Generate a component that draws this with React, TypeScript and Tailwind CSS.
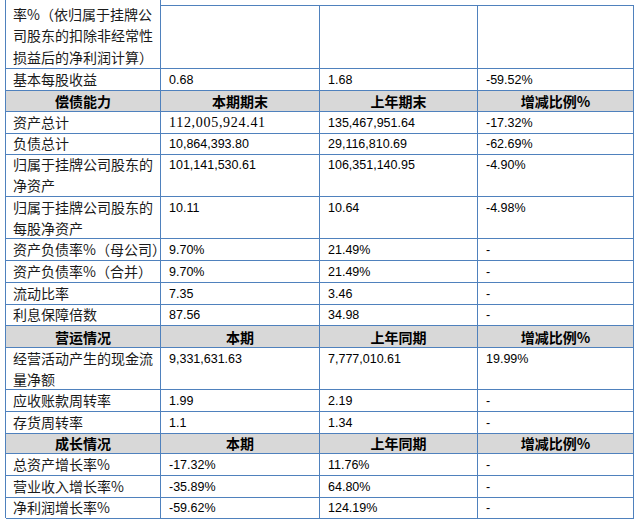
import React from "react";

type Row =
  | { kind: "header"; cells: [string, string, string, string]; h: number }
  | { kind: "data"; label: string[]; v: [string, string, string]; h: number; serif?: boolean };

const rows: Row[] = [
  { kind: "data", label: ["基本每股收益"], v: ["0.68", "1.68", "-59.52%"], h: 21 },
  { kind: "header", cells: ["偿债能力", "本期期末", "上年期末", "增减比例%"], h: 22 },
  { kind: "data", label: ["资产总计"], v: ["112,005,924.41", "135,467,951.64", "-17.32%"], h: 21, serif: true },
  { kind: "data", label: ["负债总计"], v: ["10,864,393.80", "29,116,810.69", "-62.69%"], h: 21 },
  { kind: "data", label: ["归属于挂牌公司股东的", "净资产"], v: ["101,141,530.61", "106,351,140.95", "-4.90%"], h: 43 },
  { kind: "data", label: ["归属于挂牌公司股东的", "每股净资产"], v: ["10.11", "10.64", "-4.98%"], h: 42 },
  { kind: "data", label: ["资产负债率%（母公司）"], v: ["9.70%", "21.49%", "-"], h: 22 },
  { kind: "data", label: ["资产负债率%（合并）"], v: ["9.70%", "21.49%", "-"], h: 22 },
  { kind: "data", label: ["流动比率"], v: ["7.35", "3.46", "-"], h: 21 },
  { kind: "data", label: ["利息保障倍数"], v: ["87.56", "34.98", "-"], h: 22 },
  { kind: "header", cells: ["营运情况", "本期", "上年同期", "增减比例%"], h: 22 },
  { kind: "data", label: ["经营活动产生的现金流", "量净额"], v: ["9,331,631.63", "7,777,010.61", "19.99%"], h: 42 },
  { kind: "data", label: ["应收账款周转率"], v: ["1.99", "2.19", "-"], h: 22 },
  { kind: "data", label: ["存货周转率"], v: ["1.1", "1.34", "-"], h: 21 },
  { kind: "header", cells: ["成长情况", "本期", "上年同期", "增减比例%"], h: 21 },
  { kind: "data", label: ["总资产增长率%"], v: ["-17.32%", "11.76%", "-"], h: 22 },
  { kind: "data", label: ["营业收入增长率%"], v: ["-35.89%", "64.80%", "-"], h: 21 },
  { kind: "data", label: ["净利润增长率%"], v: ["-59.62%", "124.19%", "-"], h: 21 },
];

const cjk = { fontFamily: '"Noto Sans CJK SC", "Noto Sans", sans-serif' };
const num = { fontFamily: '"Liberation Sans", Arial, sans-serif' };
const serifNum = { fontFamily: '"Liberation Serif", "Times New Roman", serif', letterSpacing: "0.7px" };

const GRID = "grid grid-cols-[155px_159px_158px_156px]";
const B = "border-[#4f81bd]";

export default function App() {
  return (
    <div className="w-[639px] h-[521px] bg-white overflow-hidden">
      <div className={`ml-[5px] w-[629px] border-l ${B}`}>
        {/* top partial row */}
        <div className={`${GRID} h-[69px]`}>
          <div className={`border-r border-b ${B} pl-[7px] pt-[4px] text-[14px] leading-[21.3px] text-[#1a1a1a]`} style={cjk}>
            <div>率%（依归属于挂牌公</div>
            <div>司股东的扣除非经常性</div>
            <div>损益后的净利润计算）</div>
          </div>
          <div className={`mt-[5px] border-t border-r border-b ${B}`} />
          <div className={`mt-[5px] border-t border-r border-b ${B}`} />
          <div className={`mt-[5px] border-t border-r border-b ${B}`} />
        </div>
        {rows.map((r, i) =>
          r.kind === "header" ? (
            <div key={i} className={`${GRID} bg-[#d8d8d8]`} style={{ height: r.h }}>
              {r.cells.map((c, j) => (
                <div
                  key={j}
                  className={`border-r border-b ${B} flex items-center justify-center text-[14px] font-bold text-black leading-none`}
                  style={cjk}
                >
                  {c}
                </div>
              ))}
            </div>
          ) : (
            <div key={i} className={GRID} style={{ height: r.h }}>
              <div className={`border-r border-b ${B} pl-[7px] pt-[0px] text-[14px] leading-[20.5px] text-[#1a1a1a]`} style={cjk}>
                {r.label.map((l, k) => (
                  <div key={k} className="whitespace-nowrap">{l}</div>
                ))}
              </div>
              {r.v.map((v, j) => (
                <div
                  key={j}
                  className={`border-r border-b ${B} pl-[8px] pt-[1px] text-[12.5px] leading-[20px] text-black whitespace-nowrap`}
                  style={r.serif && j === 0 ? { ...serifNum, fontSize: "14px" } : num}
                >
                  {v}
                </div>
              ))}
            </div>
          )
        )}
      </div>
    </div>
  );
}
